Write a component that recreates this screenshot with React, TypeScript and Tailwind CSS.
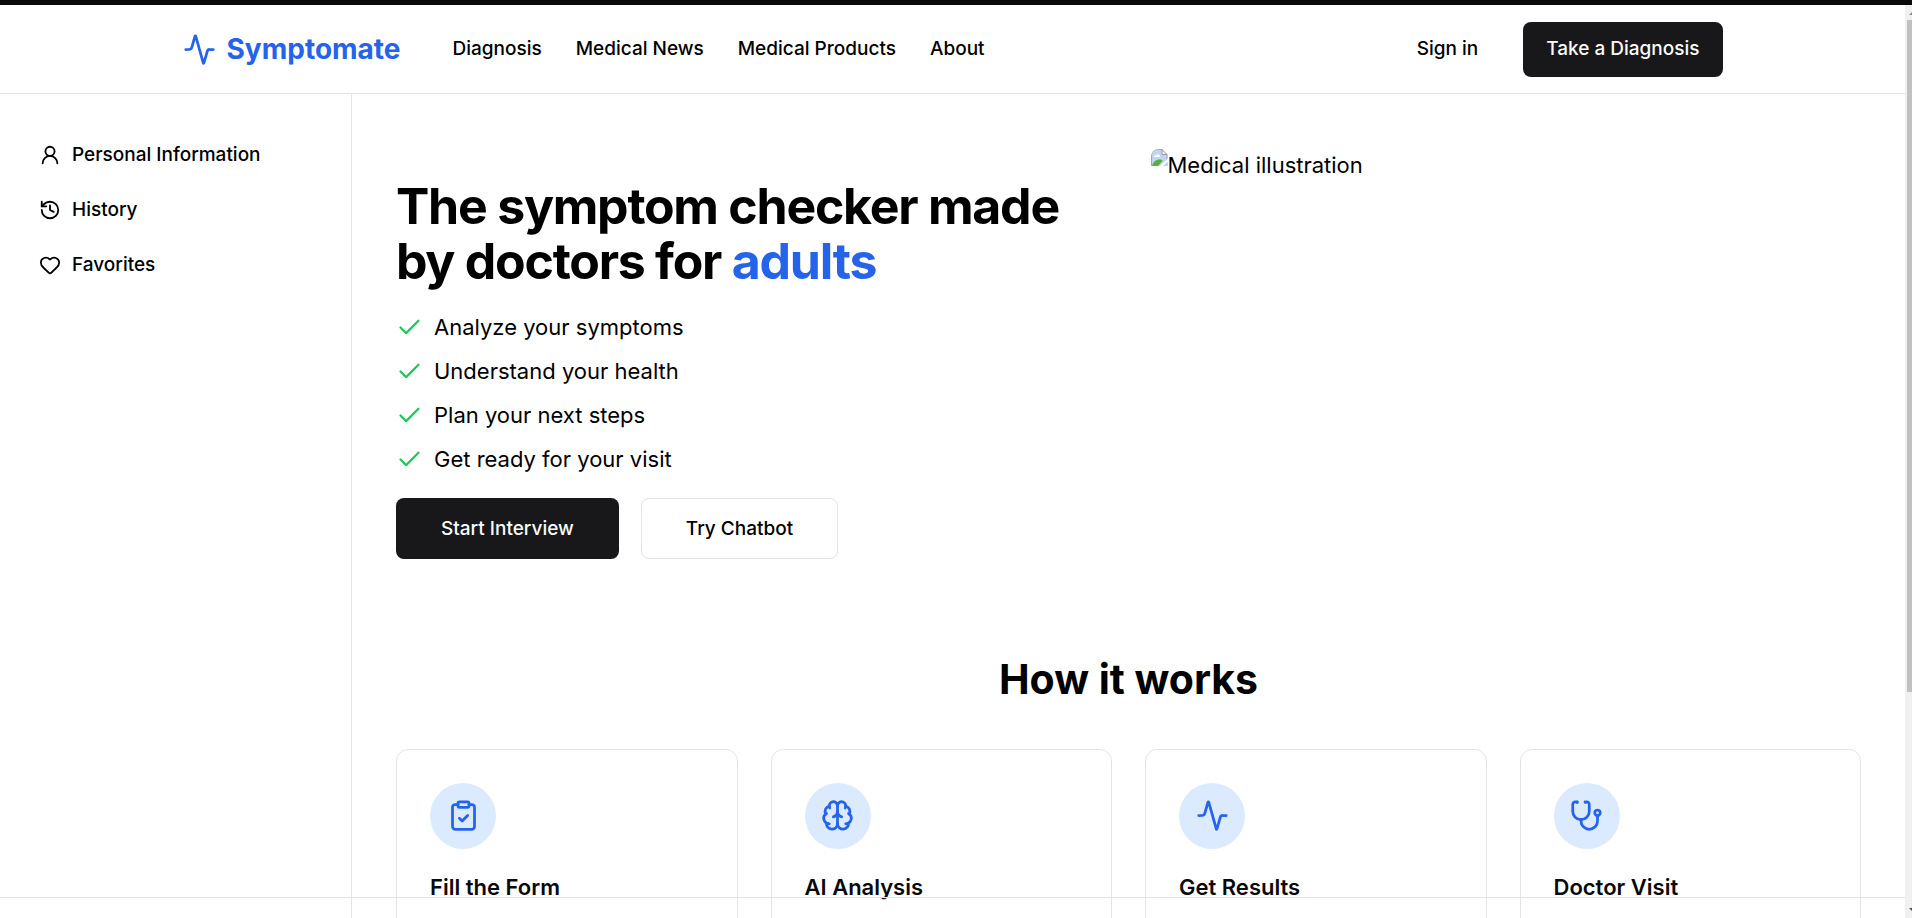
import { Activity, Brain, Check, ClipboardCheck, Heart, History, UserRound } from "lucide-react";

function Stethoscope({ className }: { className?: string }) {
  return (
    <svg
      viewBox="0 0 24 24"
      className={className}
      fill="none"
      stroke="currentColor"
      strokeWidth="2"
      strokeLinecap="round"
      strokeLinejoin="round"
      aria-hidden="true"
    >
      <path d="M4.8 2.3A.3.3 0 1 0 5 2H4a2 2 0 0 0-2 2v5a6 6 0 0 0 6 6 6 6 0 0 0 6-6V4a2 2 0 0 0-2-2h-1a.2.2 0 1 0 .3.3" />
      <path d="M8 15v1a6 6 0 0 0 6 6 6 6 0 0 0 6-6v-4" />
      <circle cx="20" cy="10" r="2" />
    </svg>
  );
}

const navLinks = ["Diagnosis", "Medical News", "Medical Products", "About"];

const sideLinks = [
  { label: "Personal Information", Icon: UserRound },
  { label: "History", Icon: History },
  { label: "Favorites", Icon: Heart },
];

const benefits = [
  "Analyze your symptoms",
  "Understand your health",
  "Plan your next steps",
  "Get ready for your visit",
];

const steps = [
  { title: "Fill the Form", Icon: ClipboardCheck },
  { title: "AI Analysis", Icon: Brain },
  { title: "Get Results", Icon: Activity },
  { title: "Doctor Visit", Icon: Stethoscope },
];

function Header() {
  return (
    <header className="shrink-0 border-b border-[#e4e4e7]">
      <div className="mx-auto flex h-[88px] max-w-[1540px] items-center">
        <a href="#" className="mr-[52px] flex items-center gap-[11px] text-[#2563eb]">
          <Activity className="size-[33px]" />
          <span className="text-[28px] leading-10 font-bold">Symptomate</span>
        </a>
        <nav className="flex items-center gap-[34px] text-[19px] leading-7 font-medium">
          {navLinks.map((label) => (
            <a key={label} href="#">{label}</a>
          ))}
        </nav>
        <div className="ml-auto flex items-center gap-[22px] text-[19px] leading-7 font-medium">
          <button type="button" className="h-[55px] rounded-lg px-[23px]">Sign in</button>
          <button type="button" className="h-[55px] rounded-lg bg-[#18181b] px-[23px] text-[#fafafa]">
            Take a Diagnosis
          </button>
        </div>
      </div>
    </header>
  );
}

function Sidebar() {
  return (
    <aside className="w-[352px] shrink-0 border-r border-[#e4e4e7] px-[39px] py-[33px]">
      <nav className="flex flex-col text-[19px] leading-7 font-medium">
        {sideLinks.map(({ label, Icon }) => (
          <a key={label} href="#" className="flex h-[55px] items-center gap-[11px]">
            <Icon className="size-[22px]" />
            {label}
          </a>
        ))}
      </nav>
    </aside>
  );
}

function MissingImage() {
  return (
    <div role="img" aria-label="Medical illustration" className="flex h-[440px] items-start overflow-hidden rounded-lg">
      <svg viewBox="0 0 17 17" className="size-[17px] shrink-0" aria-hidden="true">
        <path d="M0 0h11l5.500 5.500V17H0z" fill="#c3d3f0" />
        <path d="M.5 17V6a6 6 0 0 1 6-5.500H11M16 6v6" stroke="#a3a8b0" fill="none" />
        <path d="M3 8c0-1.500 1.500-2 2.500-1.500C6 4.500 9 5 9 7.500V8z" fill="#fff" />
        <path d="M1 17c1-4 4-6.500 7.500-6.500 2 0 3 .5 3 1.500l-4.500 5z" fill="#56b040" />
        <path d="M17 9.500v3L12 17H8.500z" fill="#fff" />
        <path d="M17 13v4h-4z" fill="#c3d3f0" />
        <path d="M11 .5v5h5z" fill="#f2f4f8" stroke="#9a9a9a" strokeWidth="1" />
      </svg>
      <span className="text-[22px] leading-[33px]">Medical illustration</span>
    </div>
  );
}

function Hero() {
  return (
    <section className="grid grid-cols-2 gap-11">
      <div className="flex flex-col justify-center gap-[22px]">
        <h1 className="text-[50px] leading-[55px] font-bold tracking-tight">
          The symptom checker made
          <br />
          by doctors for <span className="text-[#2563eb]">adults</span>
        </h1>
        <ul className="flex flex-col gap-[11px] text-[22px] leading-[33px]">
          {benefits.map((text) => (
            <li key={text} className="flex items-center gap-[11px]">
              <Check className="size-[27px] text-[#22c55e]" />
              {text}
            </li>
          ))}
        </ul>
        <div className="flex gap-[22px] text-[19px] leading-7 font-medium">
          <button type="button" className="h-[61px] rounded-lg bg-[#18181b] px-[45px] text-[#fafafa]">Start Interview</button>
          <button type="button" className="h-[61px] rounded-lg border border-[#e4e4e7] px-11">Try Chatbot</button>
        </div>
      </div>
      <MissingImage />
    </section>
  );
}

function HowItWorks() {
  return (
    <section className="mt-[66px]">
      <h2 className="mb-[46px] text-center text-[41px] leading-[48px] font-bold">How it works</h2>
      <div className="grid grid-cols-4 gap-[33px]">
        {steps.map(({ title, Icon }) => (
          <article key={title} className="min-h-64 rounded-xl border border-[#e4e4e7] p-[33px]">
            <div className="mb-[22px] flex size-[66px] justify-center rounded-full bg-blue-100 pt-4 text-[#2563eb]">
              <Icon className="size-[33px]" />
            </div>
            <h3 className="text-[22px] leading-[33px] font-semibold text-[#09090b]">{title}</h3>
          </article>
        ))}
      </div>
    </section>
  );
}

function Scrollbar() {
  return (
    <div aria-hidden="true" className="flex w-[7px] shrink-0 flex-col overflow-hidden bg-[#f0f0f0]">
      <svg viewBox="0 0 7 15" className="h-[15px] w-[7px] shrink-0">
        <path d="M4 10l4-4v4z" fill="#8a8a8a" />
      </svg>
      <div className="ml-0.5 flex-[10] bg-[#c1c1c1]" />
      <div className="flex-[3]" />
      <svg viewBox="0 0 7 24" className="h-6 w-[7px] shrink-0">
        <path d="M4 14l4 4v-4z" fill="#505050" />
      </svg>
    </div>
  );
}

export default function App() {
  return (
    <div className="flex h-screen flex-col overflow-hidden bg-white font-[Inter,sans-serif] text-black">
      <div className="h-[5px] shrink-0 bg-[#0a0a0a]" />
      <div className="flex min-h-0 flex-1">
        <div className="relative flex min-w-0 flex-1 flex-col overflow-hidden">
          <Header />
          <div className="flex min-h-0 flex-1">
            <Sidebar />
            <main className="min-w-0 flex-1 overflow-hidden px-11 pt-[55px]">
              <Hero />
              <HowItWorks />
            </main>
          </div>
          <div className="pointer-events-none absolute inset-x-0 bottom-5 border-t border-[#e4e4e7]" />
        </div>
        <Scrollbar />
      </div>
    </div>
  );
}
